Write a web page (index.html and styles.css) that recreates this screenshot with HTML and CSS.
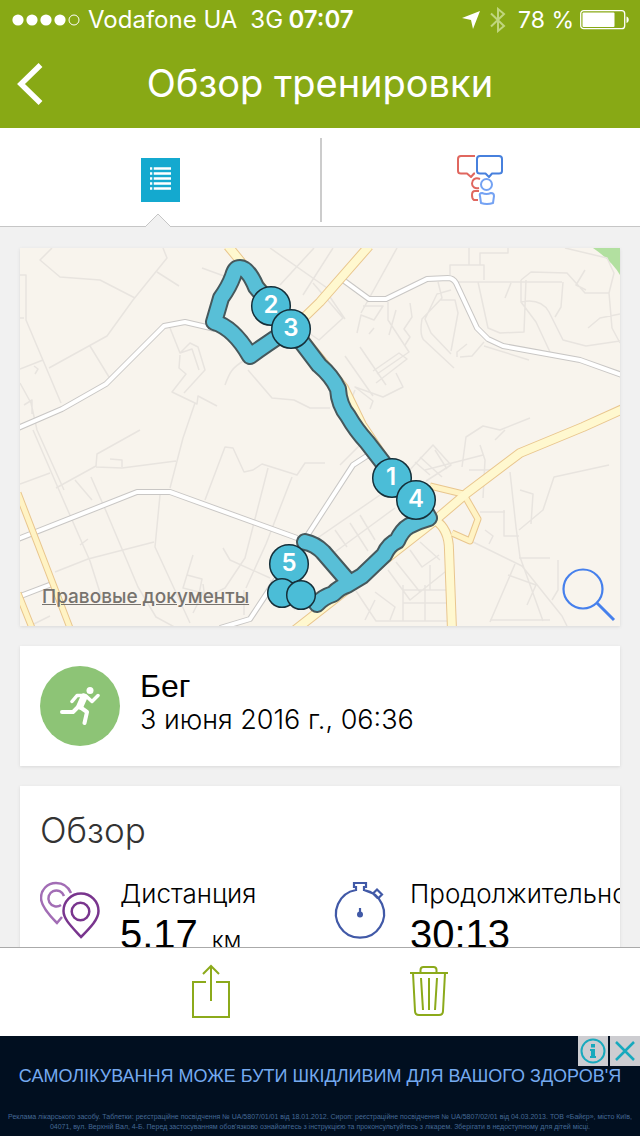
FILE: index.html
```html
<!DOCTYPE html>
<html lang="ru">
<head>
<meta charset="utf-8">
<meta name="viewport" content="width=device-width, initial-scale=1">
<title>Обзор тренировки</title>
<link rel="stylesheet" href="styles.css">
</head>
<body>
<header class="top">
  <div class="status">
    <div class="status-left">
      <svg class="signal" viewBox="0 0 68 14" aria-hidden="true"><g fill="#fff"><circle cx="6" cy="7" r="5.6"/><circle cx="20" cy="7" r="5.6"/><circle cx="34" cy="7" r="5.6"/><circle cx="48" cy="7" r="5.6"/></g><circle cx="62" cy="7" r="5" fill="none" stroke="#fff"/></svg>
      <span class="carrier">Vodafone UA</span>
      <span>3G</span>
    </div>
    <time class="clock">07:07</time>
    <div class="status-right">
      <svg class="locate" viewBox="0 0 18 18" aria-hidden="true"><path d="M18 0 11 18 9 9 0 7Z" fill="#fff"/></svg>
      <svg class="bluetooth" viewBox="0 0 16 26" aria-hidden="true"><path d="M1 6.500 14 19 8 24V2l6 5L1 19.500" fill="none" stroke="#c0d67e" stroke-width="2"/></svg>
      <span class="charge">78 %</span>
      <svg class="battery" viewBox="0 0 50 20" aria-hidden="true"><rect x=".7" y=".7" width="44" height="18" rx="3" fill="none" stroke="#fff" stroke-width="1.300"/><rect x="2.500" y="2.500" width="32" height="14.500" rx="1" fill="#fff"/><path d="M46.500 6.500c3 1 3 5.500 0 6.500Z" fill="#fff"/></svg>
    </div>
  </div>
  <div class="titlebar">
    <button class="back" type="button" aria-label="Назад"><svg viewBox="0 0 26 42" aria-hidden="true"><path d="M23.500 2 4 21 23.500 40" fill="none" stroke="#fff" stroke-width="5.500"/></svg></button>
    <h1 class="title">Обзор тренировки</h1>
  </div>
</header>

<nav class="tabs">
  <button class="tab active" type="button" aria-label="Обзор">
    <svg class="tab-list" viewBox="0 0 40 44" aria-hidden="true"><path fill="#14a9cf" d="M1 0h39v44H1z"/><path d="M10 10.500h21M10 15.500h21M10 20.500h21M10 25.500h21M10 30.500h21" stroke="#fff" stroke-width="2.300"/><path d="M13 8v25" stroke="#14a9cf" stroke-width="1.500"/></svg>
    <svg class="notch" viewBox="0 0 26 14" aria-hidden="true"><path d="M0 14 13 1l13 13" fill="#f1f1f1" stroke="#c6c6c6"/></svg>
  </button>
  <button class="tab" type="button" aria-label="Комментарии">
    <svg class="tab-chat" viewBox="0 0 46 50" fill="none" stroke-width="2" stroke-linejoin="round" aria-hidden="true"><g stroke="#e0675f"><path d="M18 1H4Q1 1 1 4v12q0 2.500 3 2.500h6l4 3.500 3-3.500h1"/><path d="M23 24c-5-2-8 1-8 4.500s3 5.500 7 4.500M21 45h-4q-2-1-2-5 0-4 3-4h4"/></g><path d="M23 1h19q3 0 3 3v12q0 2.500-3 2.500h-7L32 22l-3.500-3.500H23q-3 0-3-2.500V4q0-3 3-3Z" stroke="#4780dd"/><g stroke="#74a2f3"><circle cx="29.500" cy="29.500" r="5.500"/><path d="M25 38q4.500 2 9 0 3 0 3 3l-1 7q-6 2-12 0l-1-7q-1-3 2-3Z"/></g></svg>
  </button>
</nav>

<main class="content">
  <section class="card map" aria-label="Маршрут">
    <svg class="map-canvas" viewBox="20 248 600 378" fill="none" aria-hidden="true">
      <path fill="#f8f4ed" d="M20 248h600v378H20z"/>
      <path fill="#b2e0a0" d="M593 248h27v27q-8-14-27-27Z"/>
      <g stroke="#e8e4df" stroke-width="1.500" stroke-linejoin="round">
        <path d="M52 248 40 260l20 17 40 3 35 18M163 248l4 10-34 42-26 36-58 32M157 272l22 14M20 275h6v45l35 83M20 369l23-9M90 346l19 31M20 318h4M34 366l4 3-3 5M20 383l11 20 6 27 27 60M24 405l8-5v14"/>
        <path d="M170 328l10 25 10-10 8 4 7 23-21 23M180 353l12-4 7 21M180 355l-1 13 7 6-14 18 25 12 1-8 19 10M195 403l-12 35-13 50M140 430l-43 24-1 12-40 22M20 484l30-11M110 459l12 1v7M96 467l26 1 54-7M202 268l22 8M245 360c-14 8-16 14-20 25M248 370l24 28 22 2 16 8h20"/>
        <path d="M33 430 62 497l28 64 12 38M91 477l15 34 32 76 18 30 24 13M55 572l33-13 66-17M75 480l17 20M160 495l-5 52 35 76M205 500l20-53 8 1 11 24 9-2 9-6 35 11 8-12h20M268 468l-23 90-20 30-20 10-2-14M292 477l-26 67-20 44M223 548l7 12 40 18M187 575l15 4-5 25M193 555l-10 33 20 5-10 20M80 545l8-6M244 590v25M270 580l25 30"/>
        <path d="M313 283l30 35-24 22-52-36M280 285l34-37M303 295l30-47M270 248l60 42M365 440l-25 25M397 248l-36 65M330 297l15 22M363 306h20l-9 14-13-5-4 18M388 302v18l21 32-32 22M396 310l-7 25M374 328l-5 6M410 303l2 14-8 12 6 8-5 8M345 356l28 40M360 347l26 38M373 371l26-18 8 6-31 24M396 373l7 14-20 10-28-10 18 14-3 8M355 390l-8 20"/>
        <path d="M438 282l4 16-20 21q-3 18 3 22l29 27M451 290l-14 4-12 25 6 14 20 21M440 300h15l3 13-7 38M450 275v-10h34v15M469 265v-17M480 265v-12h28v-5M456 282h106M478 282l10 46 12 5 24-1 2-52M511 283l-6 15M521 280l10-8 36 1 18 20h24l5-20-7-15-42-10M521 280v22l15 20 14 30M521 302q20-4 28 10l14 28 23 6 34-5M563 282l-2 25-6 10M585 270l-9 15 10 5M609 293l3 35 8 15M588 328l12-10 20-4M457 357v-5l10-8M460 357l12-1 12-14M484 346l45 14"/>
        <path d="M462 467l4-30 17-11 17 4 30-12M480 445l5 15-2 38M505 430l-10 10M490 470l-21 0M510 472l6 55 4 30 23 64M519 530l24-20 11-33 55-12M520 490l13 4-2 30M504 510v26h15M480 512h25M485 530l8 6-4 8M519 558h31M469 540l53 26 40 50 5 10M515 564l-25 58M508 575l28 10-9 20M558 560v30l-6 10M490 620h60"/>
        <path d="M405 475l28-30 18 20-25 16M420 457l22 20M415 462l15 13M435 450l12 19M380 495l-80 55M395 508l-60 44M360 515l15 25M350 523l18 28M335 530l12 17M425 470l58-15"/>
        <path d="M388 570l22 30 40-32M396 562l24 30M410 550l12 17 17-12M420 542l20 18M375 592l20 15-5 13M356 591l20 30h74M403 585v36M425 585v36M403 590h46M403 603h46M430 565v25M375 600l-10 20M30 626l20-10"/>
      </g>
      <g stroke-linejoin="round">
        <path class="road-edge" d="M18 428 62 409 106 384 164 326 185 322 215 329M343 280l26 19h17l41-20 21-1q5 0 8 5l21 45 11 11 15 7 77 14 42 15M18 539l119-47h33l127 46M18 597l34-13M220 628l30-9 23-35 32-45 48-74 20-13"/>
        <path class="road-fill" d="M18 428 62 409 106 384 164 326 185 322 215 329M343 280l26 19h17l41-20 21-1q5 0 8 5l21 45 11 11 15 7 77 14 42 15M18 539l119-47h33l127 46M18 597l34-13M220 628l30-9 23-35 32-45 48-74 20-13"/>
        <path class="lane-edge" d="M18 493 70 628M18 593l14 35M430 486l33 8M463 493l15 26-8 22-18-8"/>
        <path class="main-edge" d="M228 246l36 44 36 44 44 54 18 37 32 48 43 49M369 246l-49 56-35 34M295 630l138-108 34-29 53-40 63-26 40-18M435 520q14 9 14 30l3 80"/>
        <path class="lane-fill" d="M18 493 70 628M18 593l14 35M430 486l33 8M463 493l15 26-8 22-18-8"/>
        <path class="main-fill" d="M228 246l36 44 36 44 44 54 18 37 32 48 43 49M369 246l-49 56-35 34M295 630l138-108 34-29 53-40 63-26 40-18M435 520q14 9 14 30l3 80"/>
      </g>
      <g stroke-linejoin="round" stroke-linecap="round">
        <path class="route-edge" d="M271 305 256 287Q248 268 240 268q-5 0-7 8-4 11-12 22l-7 24q20 6 36 34 15-11 41-28l28 37q13 11 19 24 1 16 10 27 8 14 19 26l27 35 24 22 11 19q-11 3-20 8-7 4-12 15-8 3-13 14l-22 21-15 9q-7 2-14 9-10 3-16 10M305 542q10 2 18 10l25 29"/>
        <path class="route-fill" d="M271 305 256 287Q248 268 240 268q-5 0-7 8-4 11-12 22l-7 24q20 6 36 34 15-11 41-28l28 37q13 11 19 24 1 16 10 27 8 14 19 26l27 35 24 22 11 19q-11 3-20 8-7 4-12 15-8 3-13 14l-22 21-15 9q-7 2-14 9-10 3-16 10M305 542q10 2 18 10l25 29"/>
      </g>
      <g fill="#4bbdd7" stroke="#16303a" stroke-width="1.500">
        <circle cx="271" cy="306" r="19.300"/><circle cx="291" cy="329" r="19.300"/><circle cx="392" cy="478" r="19.300"/><circle cx="416" cy="500" r="19.300"/><circle cx="289" cy="564" r="19.300"/><circle cx="282" cy="593" r="14.300"/><circle cx="301" cy="595" r="14.300"/>
      </g>
      <g class="marker-text"><text x="271" y="313">2</text><text x="291" y="336">3</text><text x="391" y="485">1</text><text x="416" y="507">4</text><text x="289" y="571">5</text></g>
    </svg>
    <a class="legal" href="#legal">Правовые документы</a>
    <button class="magnify" type="button" aria-label="Увеличить карту"><svg viewBox="0 0 54 54" fill="none" stroke="#4680ec" aria-hidden="true"><circle cx="21" cy="21" r="19.500" stroke-width="2.200"/><path d="m35 35 17 17" stroke-width="3"/></svg></button>
  </section>

  <section class="card activity">
    <span class="activity-icon"><svg viewBox="0 0 40 38" aria-hidden="true"><circle cx="30" cy="3.500" r="3.500" fill="#fff"/><g fill="none" stroke="#fff" stroke-linecap="round" stroke-linejoin="round"><path d="M12 14.500 17 8.500h7M26 9l6 5.500L38 8.500" stroke-width="3.500"/><path d="M24 10l-4 9" stroke-width="7"/><path d="M18 20l-5 5H2M20 20l7 5-2.500 11" stroke-width="4"/></g></svg></span>
    <div class="activity-text">
      <h2 class="activity-name">Бег</h2>
      <p class="activity-date">3 июня 2016 г., 06:36</p>
    </div>
  </section>

  <section class="card overview">
    <h2 class="overview-title">Обзор</h2>
    <dl class="stats">
      <div class="stat">
        <svg class="stat-icon" viewBox="0 0 60 60" fill="none" stroke-width="2.500" aria-hidden="true"><g stroke="#a26db5"><path d="M31 12C28 5 22 2 16 2 7 2 1 9 1 17c0 8 8 17 16 25l5-6"/><path d="M24 15a8 8 0 1 0-3 9"/></g><g stroke="#79358e"><path d="M41 56C31 45 23.500 38 23.500 30a17.500 17.500 0 0 1 35 0C58.500 38 51 46 41 56Z"/><circle cx="40.500" cy="30.500" r="8.800"/></g></svg>
        <div><dt class="stat-label">Дистанция</dt><dd class="stat-value">5.17<span class="unit">км</span></dd></div>
      </div>
      <div class="stat">
        <svg class="stat-icon" viewBox="0 0 60 60" fill="none" stroke="#4159a7" stroke-width="2.200" aria-hidden="true"><path d="M26 9a24 24 0 1 0 8 0V6h2V2H24v4h2ZM34 9l9 3.500 4-4 5 5-4 4M43 12.500l5 5"/><circle cx="30" cy="33.500" r="3" fill="#4159a7" stroke="none"/><path d="M30 27v6"/></svg>
        <div><dt class="stat-label">Продолжительность</dt><dd class="stat-value">30:13</dd></div>
      </div>
    </dl>
  </section>
</main>

<footer class="toolbar">
  <button class="tool" type="button" aria-label="Поделиться"><svg viewBox="0 0 40 56" fill="none" stroke="#8caa1b" stroke-width="2" aria-hidden="true"><path d="M15 18H2v35h36V18H25M20 37V2M12 10l8-8 8 8"/></svg></button>
  <button class="tool" type="button" aria-label="Удалить"><svg viewBox="0 0 40 56" fill="none" stroke="#8caa1b" stroke-width="2" aria-hidden="true"><path d="M1 9h38M11.500 9V6q0-3 3-3h10q3 0 3 3v3M4 9l2 38q0 4 4 4h20q4 0 4-4l2-38M12 14l2 32M20 14v32M28 14l-2 32"/></svg></button>
</footer>

<aside class="ad">
  <p class="ad-title">САМОЛІКУВАННЯ МОЖЕ БУТИ ШКІДЛИВИМ ДЛЯ ВАШОГО ЗДОРОВ'Я</p>
  <p class="ad-note">Реклама лікарського засобу. Таблетки: реєстраційне посвідчення № UA/5807/01/01 від 18.01.2012. Сироп: реєстраційне посвідчення № UA/5807/02/01 від 04.03.2013. ТОВ «Байєр», місто Київ, 04071, вул. Верхній Вал, 4-Б. Перед застосуванням обов'язково ознайомтесь з інструкцією та проконсультуйтесь з лікарем. Зберігати в недоступному для дітей місці.</p>
  <div class="ad-controls">
    <button class="ad-button" type="button" aria-label="О рекламе"><svg viewBox="0 0 30 30" aria-hidden="true"><circle cx="15" cy="15" r="11.500" fill="none" stroke="#18a9bd" stroke-width="2"/><path d="M13 8h4v3.500h-4zM12 13h5v7h1v2h-6v-2h1v-5h-1z" fill="#18a9bd"/></svg></button>
    <button class="ad-button" type="button" aria-label="Закрыть рекламу"><svg viewBox="0 0 30 30" aria-hidden="true"><path d="m6 6 18 18M24 6 6 24" stroke="#18a9bd" stroke-width="2.500"/></svg></button>
  </div>
</aside>
</body>
</html>
```
FILE: styles.css
```css
* { box-sizing: border-box; }
body {
  margin: 0;
  height: 100vh;
  display: flex;
  flex-direction: column;
  background: #f1f1f1;
  color: #000;
  font-family: Inter, "Liberation Sans", sans-serif;
}
h1, h2, p, dl, dd { margin: 0; }
svg { display: block; }
button { border: 0; padding: 0; background: none; cursor: pointer; }

.top { background: #88a915; color: #fff; flex: none; }
.status {
  height: 40px;
  padding: 0 10px 0 12px;
  display: grid;
  grid-template-columns: 1fr auto 1fr;
  align-items: center;
  font-size: 24px;
  line-height: 40px;
  white-space: nowrap;
}
.status-left, .status-right { display: flex; align-items: center; }
.status-left { gap: 8px; }
.status-right { justify-content: flex-end; gap: 6px; }
.carrier { margin-right: 5px; }
.signal { width: 68px; height: 14px; }
.clock { font-weight: 600; padding: 0 4px; }
.charge { font-size: 23px; }
.locate { width: 18px; height: 18px; margin-right: 4px; }
.bluetooth { width: 16px; height: 26px; margin-right: 6px; }
.battery { width: 50px; height: 20px; }
.titlebar {
  height: 88px;
  display: grid;
  grid-template-columns: 60px 1fr 60px;
  align-items: center;
}
.back { height: 88px; padding-left: 17px; }
.back svg { width: 26px; height: 42px; }
.title { font-size: 38px; line-height: 44px; font-weight: 400; text-align: center; padding-bottom: 2px; }

.tabs {
  flex: none;
  display: grid;
  grid-template-columns: 1fr 1fr;
  height: 99px;
  background: #fff;
  border-bottom: 1px solid #c6c6c6;
}
.tab { position: relative; display: grid; place-items: center; }
.tab + .tab::before {
  content: "";
  position: absolute;
  left: 0;
  top: 10px;
  bottom: 4px;
  width: 2px;
  background: #ccc;
}
.tab-list { width: 40px; height: 44px; margin-top: 6px; }
.tab-chat { width: 46px; height: 50px; margin-top: 6px; }
.notch { position: absolute; bottom: -1px; left: calc(50% - 15px); width: 26px; height: 14px; }

.content {
  flex: 1;
  min-height: 0;
  overflow-y: auto;
  scrollbar-width: none;
  padding: 21px 20px 20px;
  display: flex;
  flex-direction: column;
  gap: 20px;
}
.card { flex: none; background: #fff; box-shadow: 0 1px 3px #d8d8d8; }
.map { position: relative; }
.map-canvas { width: 100%; height: auto; }
.road-edge { stroke: #c9c7c5; stroke-width: 6; }
.road-fill { stroke: #fff; stroke-width: 4; }
.lane-edge { stroke: #e9c68e; stroke-width: 7; }
.lane-fill { stroke: #fff3c4; stroke-width: 5; }
.main-edge { stroke: #e9c68e; stroke-width: 10; }
.main-fill { stroke: #fff8cf; stroke-width: 8; }
.route-edge { stroke: #46585c; stroke-width: 18; }
.route-fill { stroke: #58bfd7; stroke-width: 14; }
.marker-text { fill: #fff; font: 600 24px Inter, sans-serif; text-anchor: middle; }
.legal {
  position: absolute;
  left: 22px;
  bottom: 17px;
  font-size: 19px;
  line-height: 24px;
  font-weight: 500;
  color: #77736e;
}
.magnify { position: absolute; right: 4px; bottom: 4px; }
.magnify svg { width: 54px; height: 54px; }

.activity { display: flex; align-items: center; gap: 20px; padding: 20px; }
.activity-icon {
  width: 80px;
  height: 80px;
  border-radius: 50%;
  background: #8dc476;
  display: grid;
  place-items: center;
}
.activity-icon svg { width: 40px; height: 38px; }
.activity-text { padding-bottom: 8px; }
.activity-name { font: 400 32px/36px "Liberation Sans", sans-serif; }
.activity-date { font-size: 27px; line-height: 32px; font-weight: 300; }

.overview { padding: 20px; overflow: hidden; }
.overview-title { font-size: 35px; line-height: 48px; font-weight: 300; color: #333; }
.stats { display: grid; grid-template-columns: 1fr 1fr; column-gap: 20px; margin-top: 24px; }
.stat { display: flex; gap: 20px; min-width: 0; white-space: nowrap; }
.stat-icon { flex: none; width: 60px; height: 60px; margin-top: 3px; }
.stat-label { font-size: 26px; line-height: 32px; font-weight: 300; }
.stat-value { font: 400 40px/48px "Liberation Sans", sans-serif; }
.unit { font: 300 23px Inter, sans-serif; margin-left: 14px; }

.toolbar {
  flex: none;
  height: 89px;
  padding: 0 102px;
  border-top: 1px solid #aaa;
  background: #fff;
  display: grid;
  grid-template-columns: 1fr 1fr;
}
.tool { display: grid; place-items: center; }
.tool svg { width: 40px; height: 56px; }

.ad {
  position: relative;
  flex: none;
  height: 100px;
  padding: 12px 8px 0;
  overflow: hidden;
  background: #010f20;
  color: #75aaf0;
}
.ad-title {
  font: 400 18px/56px "Liberation Sans", sans-serif;
  white-space: nowrap;
  text-align: center;
}
.ad-note { margin-top: 8px; font: 400 7px/10px "Liberation Sans", sans-serif; color: #456995; text-align: center; }
.ad-controls { position: absolute; top: 0; right: 0; display: flex; gap: 2px; }
.ad-button { width: 30px; height: 30px; background: #cdcdd1; }
```
